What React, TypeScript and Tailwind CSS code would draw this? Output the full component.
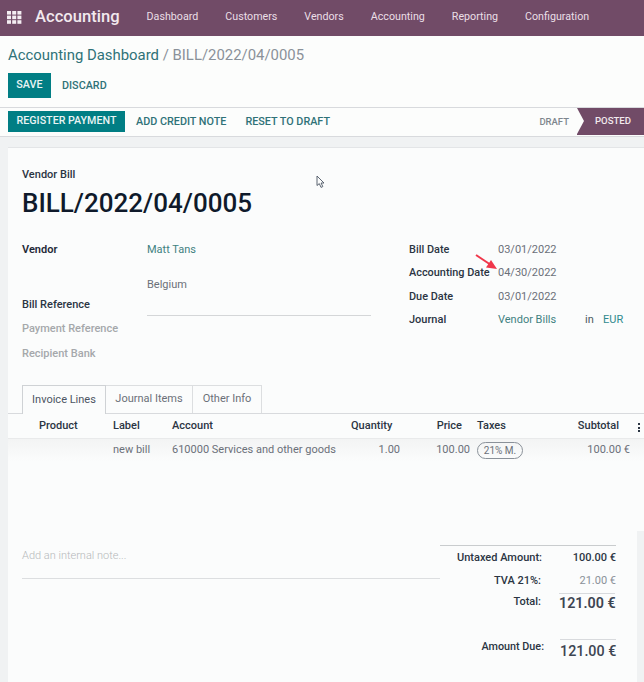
import React from "react";

const font = { fontFamily: '"Roboto", "Liberation Sans", sans-serif' };
const navItems = ["Dashboard", "Customers", "Vendors", "Accounting", "Reporting", "Configuration"];

function Grid() {
  return (
    <svg width="15" height="13" viewBox="0 0 15 13" fill="#f4eef2" className="shrink-0">
      {[0, 5.2, 10.4].map((x) =>
        [0, 4.6, 9.2].map((y) => <rect key={`${x}-${y}`} x={x} y={y} width="4" height="3.6" />)
      )}
    </svg>
  );
}

function FieldRow({ label, value }: { label: string; value: string }) {
  return (
    <div className="flex h-5 items-center">
      <div className="w-[89px] shrink-0 whitespace-nowrap text-[10.9px] font-medium text-[#2b3543]">{label}</div>
      <div className="text-[11px] text-[#6b7079]">{value}</div>
    </div>
  );
}

export default function App() {
  return (
    <div style={font} className="relative h-[682px] w-[644px] overflow-hidden bg-[#fcfdfc]">
      <header className="flex h-9 items-center bg-[#714b67] pb-[1px] pl-[7px]">
        <Grid />
        <span className="ml-[13px] text-[16.6px] font-medium text-[#f1e9ee]">Accounting</span>
        <nav className="ml-[27px] flex gap-[27px] text-[10.7px] text-[#eadfe6]">
          {navItems.map((n) => (
            <span key={n}>{n}</span>
          ))}
        </nav>
      </header>

      <div className="h-[71px] px-2 pt-[9px]">
        <div className="text-[14.9px] leading-5 text-[#8a9199]">
          <span className="text-[#2f7278]">Accounting Dashboard</span> / BILL/2022/04/0005
        </div>
        <div className="mt-2 flex items-center">
          <button className="h-[25px] w-[43px] bg-[#017e84] text-[10.8px] font-medium text-[#e9f4f4]">SAVE</button>
          <span className="ml-[11px] mt-[1px] text-[10.8px] font-medium text-[#2f7278]">DISCARD</span>
        </div>
      </div>

      <div className="flex h-[30px] items-center border-y border-[#d8dadd] pl-2">
        <button className="mb-[1px] h-[21px] w-[117px] bg-[#017e84] text-[10.7px] font-medium whitespace-nowrap text-[#e9f4f4]">REGISTER PAYMENT</button>
        <span className="ml-[11px] text-[10.8px] font-medium text-[#2f7278]">ADD CREDIT NOTE</span>
        <span className="ml-[19px] text-[10.8px] font-medium text-[#2f7278]">RESET TO DRAFT</span>
        <span className="ml-auto mr-[8px] text-[9.5px] font-medium text-[#7e868d]">DRAFT</span>
        <div className="relative flex h-[27px] w-[67px] items-center justify-end self-start bg-[#714b67] pr-[13px] text-[9.6px] font-medium text-[#f1e9ee]">
          <span className="absolute left-0 top-0 h-0 w-0 border-y-[13.5px] border-l-[7px] border-y-transparent border-l-[#fcfdfc]" />
          POSTED
        </div>
      </div>

      <div className="bg-[#f0f2f3] pl-2 pt-[10px]">
        <div className="h-[535px] border-t border-[#e3e5e7] bg-[#fbfcfc] pt-[20px]">
          <div className="px-[14px]">
            <div className="text-[11px] leading-[14px] font-medium text-[#2b3543]">Vendor Bill</div>
            <div className="mt-[6px] text-[26px] leading-[30px] font-medium text-[#0f1a2b]">BILL/2022/04/0005</div>
          </div>

          <div className="mt-[20px] flex pl-[14px]">
            <div className="w-[349px] shrink-0">
              <div className="flex h-[24px] items-center">
                <div className="w-[125px] text-[11px] font-semibold text-[#1f2937]">Vendor</div>
                <div className="mt-[1px] text-[11px] text-[#3f8181]">Matt Tans</div>
              </div>
              <div className="mt-[12px] flex h-[22px] items-center pl-[125px] text-[11px] text-[#6b7079]">Belgium</div>
              <div className="-mt-[1px] flex h-[21px] items-center">
                <div className="w-[125px] pb-[1px] text-[11px] font-medium text-[#2b3543]">Bill Reference</div>
                <div className="h-full flex-1 border-b border-[#d4d6d8]"></div>
              </div>
              <div className="flex h-[21px] items-end text-[11px] font-medium text-[#a5a8ab]">Payment Reference</div>
              <div className="flex h-[25px] items-end text-[11px] font-medium text-[#a5a8ab]">Recipient Bank</div>
            </div>
            <div className="ml-[38px] flex flex-col gap-[3.4px] pt-[2px]">
              <FieldRow label="Bill Date" value="03/01/2022" />
              <FieldRow label="Accounting Date" value="04/30/2022" />
              <FieldRow label="Due Date" value="03/01/2022" />
              <div className="flex h-5 items-center text-[11px]">
                <div className="w-[89px] font-medium text-[#2b3543]">Journal</div>
                <div className="w-[87px] text-[#3f8181]">Vendor Bills</div>
                <div className="w-[18px] text-[#4b5a60]">in</div>
                <div className="text-[#2f8a8e]">EUR</div>
              </div>
            </div>
          </div>

          <div className="mt-[23px] flex h-[29px] border-b border-[#d8dadd] pl-[14px] text-[11px]">
            <div className="z-10 flex h-[29px] w-[84px] items-center justify-center border-x border-t border-[#cfd2d5] bg-[#fbfcfc] text-[#4c5563]">Invoice Lines</div>
            <div className="flex h-[28px] w-[87px] items-center justify-center border-r border-t border-[#dcdee0] text-[#6b7079]">Journal Items</div>
            <div className="flex h-[28px] w-[69px] items-center justify-center border-r border-t border-[#dcdee0] text-[#6b7079]">Other Info</div>
          </div>

          <div className="relative flex h-[25px] items-center border-b border-[#e9eaeb] text-[11px] font-medium text-[#2b3543]">
            <div className="w-[105px] pl-[31px]">Product</div>
            <div className="w-[59px]">Label</div>
            <div className="w-[179px]">Account</div>
            <div className="w-[40px] whitespace-nowrap text-right">Quantity</div>
            <div className="ml-[31px] w-[40px] text-right">Price</div>
            <div className="ml-[15px]">Taxes</div>
            <div className="ml-auto mr-[25px]">Subtotal</div>
            <span className="absolute right-[4px] top-[9px] flex flex-col gap-[1.5px]">
              <i className="block h-[2px] w-[2px] bg-[#2b3543]"></i>
              <i className="block h-[2px] w-[2px] bg-[#2b3543]"></i>
              <i className="block h-[2px] w-[2px] bg-[#2b3543]"></i>
            </span>
          </div>
          <div className="flex h-[22px] items-center bg-gradient-to-b from-[#f3f4f4] to-[#fbfcfc] text-[11px] text-[#6b7079]">
            <div className="w-[105px]"></div>
            <div className="w-[59px]">new bill</div>
            <div className="w-[179px] whitespace-nowrap">610000 Services and other goods</div>
            <div className="w-[49px] text-right">1.00</div>
            <div className="ml-[31px] w-[39px] text-right">100.00</div>
            <div className="ml-[7px] flex h-[17px] w-[46px] items-center justify-center rounded-full border border-[#8a9199] text-[10px]">21% M.</div>
            <div className="ml-auto mr-[14px]">100.00 €</div>
          </div>

          <div className="mt-[85px] w-[432px] pl-[14px]">
            <div className="h-[33px] border-b border-[#dcdee0] pt-[2px] text-[11px] font-light text-[#b5b8ba]">Add an internal note...</div>
          </div>
        </div>
      </div>

      <div className="absolute left-[440px] top-[545px] w-[176px] border-t border-[#c9ccce] text-[11px] font-medium text-[#2b3543]">
        <div className="flex h-[24px] items-center justify-between pl-[17px] pt-[1px]">
          <span>Untaxed Amount:</span>
          <span>100.00 €</span>
        </div>
        <div className="flex h-[21px] items-center pt-[1px]">
          <span className="ml-[54px]">TVA 21%:</span>
          <span className="ml-auto font-normal text-[#8a9199]">21.00 €</span>
        </div>
      </div>
      <div className="absolute left-[440px] top-[593px] flex h-[24px] w-[175px] items-start justify-end text-[#3d4552]">
        <span className="mr-[18px] mt-[1px] text-[11px] font-medium text-[#2b3543]">Total:</span>
        <span className="w-[56px] border-t border-[#d8dadd] text-right text-[14.3px] leading-[18px] font-semibold whitespace-nowrap">121.00 €</span>
      </div>
      <div className="absolute left-[440px] top-[639px] flex h-[24px] w-[176px] items-start justify-end text-[#3d4552]">
        <span className="mr-[16px] text-[10.8px] font-medium text-[#2b3543]">Amount Due:</span>
        <span className="w-[56px] border-t border-[#d8dadd] pt-[1px] text-right text-[14.3px] font-medium whitespace-nowrap">121.00 €</span>
      </div>

      <div className="absolute left-[637px] top-[531px] h-[151px] w-[7px] bg-[#f0f2f3]"></div>

      <svg className="absolute left-[474px] top-[253px]" width="26" height="20" viewBox="0 0 26 20">
        <path d="M2 2 L17 12" stroke="#f0364a" strokeWidth="2" fill="none" />
        <path d="M23 16 L12 14.5 L17 7 Z" fill="#f0364a" />
      </svg>
      <svg className="absolute left-[316px] top-[175px]" width="10" height="14" viewBox="0 0 10 14">
        <path d="M1 1 L1 10.5 L3.3 8.6 L5 12.4 L6.8 11.6 L5.1 8 L8 8 Z" fill="#fbfcfc" stroke="#4b5563" strokeWidth="0.9" />
      </svg>
    </div>
  );
}
